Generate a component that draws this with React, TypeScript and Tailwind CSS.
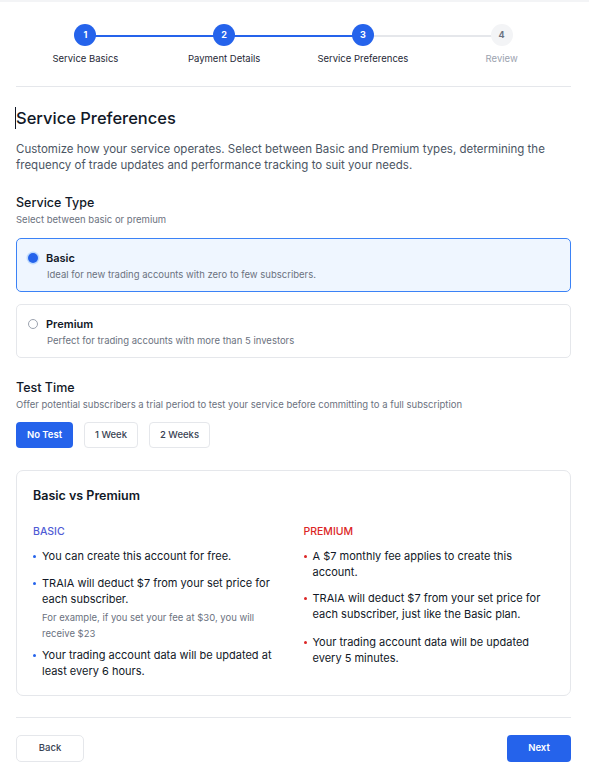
import React from "react";

const steps = [
  { n: 1, label: "Service Basics", done: true },
  { n: 2, label: "Payment Details", done: true },
  { n: 3, label: "Service Preferences", done: true },
  { n: 4, label: "Review", done: false },
];

function Dot({ color }: { color: string }) {
  return <span className={`mt-[6.5px] w-[3px] h-[3px] rounded-full shrink-0 ${color}`} />;
}

export default function App() {
  return (
    <div
      className="min-h-[778px] bg-white border-t-2 border-[#f3f4f6] pl-[16px] pr-[18px] text-[#111827]"
      style={{ fontFamily: "Inter, 'Noto Sans', sans-serif" }}
    >
      {/* Stepper */}
      <div className="relative pt-[22px] pb-[21px]">
        <div className="grid grid-cols-4">
          {steps.map((s, i) => (
            <div key={s.n} className="relative flex flex-col items-center">
              {i < steps.length - 1 && (
                <div
                  className={`absolute top-[11px] left-1/2 w-full h-[1.5px] ${
                    i < 2 ? "bg-[#2563eb]" : "bg-[#e5e7eb]"
                  }`}
                />
              )}
              <div
                className={`relative z-10 w-[22px] h-[22px] rounded-full flex items-center justify-center text-[9px] font-bold ${
                  s.done ? "bg-[#2563eb] text-white" : "bg-[#f3f4f6] text-[#6b7280]"
                }`}
              >
                {s.n}
              </div>
              <div
                className={`mt-[7px] text-[9.5px] leading-[12px] ${
                  s.done ? "text-[#1f2937]" : "text-[#9ca3af]"
                }`}
              >
                {s.label}
              </div>
            </div>
          ))}
        </div>
      </div>
      <div className="h-px bg-[#e5e7eb]" />

      {/* Heading */}
      <div className="pt-[20px]">
        <h1 className="text-[16.5px] leading-[22px] font-medium text-[#111827] border-l border-[#111827] -ml-px">
          Service Preferences
        </h1>
        <p className="mt-[12px] text-[11.5px] leading-[16px] text-[#4b5563] max-w-[545px]">
          Customize how your service operates. Select between Basic and Premium types, determining the
          frequency of trade updates and performance tracking to suit your needs.
        </p>
      </div>

      {/* Service Type */}
      <div className="mt-[22px]">
        <div className="text-[12.5px] leading-[16px] font-medium text-[#111827]">Service Type</div>
        <div className="mt-[3px] text-[9.5px] leading-[12px] text-[#6b7280]">Select between basic or premium</div>

        <div className="mt-[12px] flex flex-col gap-[12px]">
          <div className="rounded-[5px] border border-[#3b82f6] bg-[#eff6ff] px-[11px] pt-[12px] pb-[10px]">
            <div className="flex items-center gap-[8px]">
              <span className="w-[10px] h-[10px] rounded-full bg-[#2563eb] ring-[1.5px] ring-[#bfdbfe] flex items-center justify-center">
                <span className="w-[4px] h-[4px] rounded-full bg-[#2563eb]" />
              </span>
              <span className="text-[11px] leading-[14px] font-semibold text-[#111827]">Basic</span>
            </div>
            <div className="mt-[4px] pl-[19px] text-[9.5px] leading-[12px] text-[#6b7280]">
              Ideal for new trading accounts with zero to few subscribers.
            </div>
          </div>
          <div className="rounded-[5px] border border-[#e5e7eb] bg-white px-[11px] pt-[12px] pb-[10px]">
            <div className="flex items-center gap-[8px]">
              <span className="w-[10px] h-[10px] rounded-full border border-[#9ca3af] bg-white" />
              <span className="text-[11px] leading-[14px] font-semibold text-[#111827]">Premium</span>
            </div>
            <div className="mt-[4px] pl-[19px] text-[9.5px] leading-[12px] text-[#6b7280]">
              Perfect for trading accounts with more than 5 investors
            </div>
          </div>
        </div>
      </div>

      {/* Test Time */}
      <div className="mt-[22px]">
        <div className="text-[12.5px] leading-[16px] font-medium text-[#111827]">Test Time</div>
        <div className="mt-[3px] text-[9.5px] leading-[12px] text-[#6b7280]">
          Offer potential subscribers a trial period to test your service before committing to a full subscription
        </div>
        <div className="mt-[11px] flex gap-[11px]">
          <button className="h-[26px] w-[57px] rounded-[4px] bg-[#2563eb] text-white text-[9.5px] font-semibold">
            No Test
          </button>
          <button className="h-[26px] w-[54px] rounded-[4px] border border-[#e5e7eb] bg-white text-[#374151] text-[9.5px] font-medium">
            1 Week
          </button>
          <button className="h-[26px] w-[61px] rounded-[4px] border border-[#e5e7eb] bg-white text-[#374151] text-[9.5px] font-medium">
            2 Weeks
          </button>
        </div>
      </div>

      {/* Comparison card */}
      <div className="mt-[22px] rounded-[7px] border border-[#e5e7eb] px-[16px] pt-[16px] pb-[16px]">
        <div className="text-[12.5px] leading-[18px] font-semibold text-[#111827]">Basic vs Premium</div>
        <div className="mt-[20px] grid grid-cols-2 gap-[20px]">
          <div>
            <div className="text-[10.5px] leading-[14px] font-medium text-[#4f5bd5]">BASIC</div>
            <ul className="mt-[9px] max-w-[241px] flex flex-col text-[11px] leading-[16px] text-[#111827]">
              <li className="flex gap-[6px]">
                <Dot color="bg-[#2563eb]" />
                <span>You can create this account for free.</span>
              </li>
              <li className="mt-[11px] flex gap-[6px]">
                <Dot color="bg-[#2563eb]" />
                <div>
                  <div>TRAIA will deduct $7 from your set price for each subscriber.</div>
                  <div className="mt-[3px] text-[9.5px] leading-[16px] text-[#6b7280] max-w-[215px]">
                    For example, if you set your fee at $30, you will receive $23
                  </div>
                </div>
              </li>
              <li className="mt-[5px] flex gap-[6px]">
                <Dot color="bg-[#2563eb]" />
                <span>Your trading account data will be updated at least every 6 hours.</span>
              </li>
            </ul>
          </div>
          <div>
            <div className="text-[10.5px] leading-[14px] font-medium text-[#dc2626]">PREMIUM</div>
            <ul className="mt-[9px] max-w-[240px] flex flex-col text-[11px] leading-[16px] text-[#111827]">
              <li className="flex gap-[6px]">
                <Dot color="bg-[#dc2626]" />
                <span>A $7 monthly fee applies to create this account.</span>
              </li>
              <li className="mt-[10px] flex gap-[6px]">
                <Dot color="bg-[#dc2626]" />
                <span>TRAIA will deduct $7 from your set price for each subscriber, just like the Basic plan.</span>
              </li>
              <li className="mt-[12px] flex gap-[6px]">
                <Dot color="bg-[#dc2626]" />
                <span>Your trading account data will be updated every 5 minutes.</span>
              </li>
            </ul>
          </div>
        </div>
      </div>

      <div className="mt-[21px] h-px bg-[#e5e7eb]" />

      <div className="pt-[17px] flex justify-between">
        <button className="h-[27px] w-[68px] rounded-[5px] border border-[#e5e7eb] bg-white text-[9.5px] font-medium text-[#374151]">
          Back
        </button>
        <button className="h-[27px] w-[64px] rounded-[4px] bg-[#2563eb] text-white text-[9.5px] font-semibold">
          Next
        </button>
      </div>
    </div>
  );
}
